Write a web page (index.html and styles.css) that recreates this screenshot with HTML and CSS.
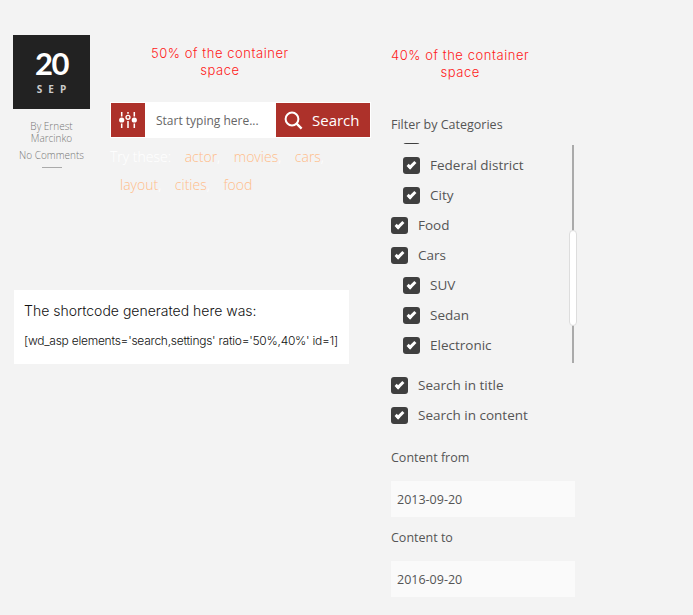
FILE: index.html
```html
<!DOCTYPE html>
<html lang="en">
<head>
  <meta charset="UTF-8">
  <meta name="viewport" content="width=device-width, initial-scale=1.0">
  <title>Search shortcode demo</title>
  <link rel="stylesheet" href="styles.css">
</head>
<body>

  <div class="page">
    <div class="post">
      <div class="post-top">
        <!-- Date and meta -->
        <div class="post-meta">
          <div class="date-box">
            <div class="date-day">20</div>
            <div class="date-month">SEP</div>
          </div>
          <div class="post-author">By Ernest Marcinko</div>
          <div class="post-comments">No Comments</div>
          <div class="post-rule"></div>
        </div>

        <!-- Search column -->
        <div class="search-col">
          <div class="ratio-note ratio-note-left">50% of the container<br>space</div>
          <div class="search-bar">
            <div class="settings-btn">
              <svg width="18" height="18" viewBox="0 0 20 20">
                <path d="M3 1v5M3 14v5M10 1v2M10 11v8M17 1v5M17 14v5" stroke="#fff" stroke-width="1.7" fill="none"/>
                <circle cx="3" cy="10" r="2.9" fill="#fff"/>
                <circle cx="10" cy="7" r="2.2" fill="none" stroke="#fff" stroke-width="1.5"/>
                <circle cx="17" cy="10" r="2.9" fill="#fff"/>
              </svg>
            </div>
            <div class="search-input">Start typing here...</div>
            <div class="search-btn">
              <svg width="19" height="19" viewBox="0 0 19 19">
                <circle cx="8" cy="8" r="6.4" fill="none" stroke="#fff" stroke-width="2"/>
                <path d="M12.6 12.6L17.6 17.6" stroke="#fff" stroke-width="2.4" fill="none"/>
              </svg>
              <span>Search</span>
            </div>
          </div>
          <div class="try-these">
            <span class="try-label">Try these:</span>
            <span class="try-item">actor<i>,</i></span>
            <span class="try-item">movies<i>,</i></span>
            <span class="try-item">cars<i>,</i></span>
            <span class="try-item">layout<i>,</i></span>
            <span class="try-item">cities<i>,</i></span>
            <span class="try-item">food</span>
          </div>
        </div>
      </div>

      <!-- Shortcode card -->
      <div class="shortcode-card">
        <p class="shortcode-title">The shortcode generated here was:</p>
        <p class="shortcode-code">[wd_asp elements='search,settings' ratio='50%,40%' id=1]</p>
      </div>
    </div>

    <!-- Settings column -->
    <div class="settings-col">
      <div class="ratio-note ratio-note-right">40% of the container<br>space</div>
      <div class="field-label filter-label">Filter by Categories</div>

      <div class="cat-list">
        <div class="cat-scroll">
          <div class="check-row nested"><span class="check"></span></div>
          <div class="check-row nested"><span class="check"></span>Federal district</div>
          <div class="check-row nested"><span class="check"></span>City</div>
          <div class="check-row"><span class="check"></span>Food</div>
          <div class="check-row"><span class="check"></span>Cars</div>
          <div class="check-row nested"><span class="check"></span>SUV</div>
          <div class="check-row nested"><span class="check"></span>Sedan</div>
          <div class="check-row nested"><span class="check"></span>Electronic</div>
        </div>
        <div class="scroll-track"></div>
        <div class="scroll-thumb"></div>
      </div>

      <div class="check-row"><span class="check"></span>Search in title</div>
      <div class="check-row"><span class="check"></span>Search in content</div>

      <div class="field-label date-label">Content from</div>
      <div class="date-input">2013-09-20</div>
      <div class="field-label date-label date-label-to">Content to</div>
      <div class="date-input">2016-09-20</div>
    </div>
  </div>

</body>
</html>
```

FILE: styles.css
```css
/* Overall body styling */
body {
  background-color: #f3f3f3;
  font-family: 'Open Sans', sans-serif;
  margin: 0;
  padding: 0;
  overflow: hidden;
}

.page {
  display: flex;
  height: 615px;
  box-sizing: border-box;
  padding: 35px 0 0 13px;
}

.post {
  width: 378px;
}

.post-top {
  display: flex;
  height: 255px;
}

/* Date block */
.post-meta {
  width: 77px;
  text-align: center;
}

.date-box {
  height: 74px;
  box-sizing: border-box;
  padding-top: 10px;
  background: #222;
  color: #fff;
}

.date-day {
  font-family: 'Lato', sans-serif;
  font-size: 31px;
  font-weight: 700;
  line-height: 36px;
  letter-spacing: -1.5px;
}

.date-month {
  font-size: 10px;
  font-weight: 700;
  line-height: 16px;
  letter-spacing: 6px;
  margin-left: 6px;
  color: #ccc;
}

.post-author {
  margin-top: 11px;
  padding: 0 12px;
  font-size: 10px;
  font-weight: 300;
  line-height: 12px;
  color: #777;
}

.post-comments {
  margin-top: 5px;
  font-size: 10px;
  font-weight: 300;
  line-height: 13px;
  color: #777;
}

.post-rule {
  width: 20px;
  margin: 5px auto 0;
  border-top: 1px solid #aaa;
}

/* Red notes */
.ratio-note {
  width: fit-content;
  font-family: 'Inter', sans-serif;
  font-size: 13px;
  font-weight: 300;
  line-height: 17px;
  letter-spacing: 0.55px;
  text-align: center;
  color: #ff1a1a;
}

.ratio-note-left {
  margin: 10px 0 0 41px;
}

.ratio-note-right {
  margin-top: 12px;
}

/* Search bar */
.search-col {
  width: 261px;
  margin-left: 20px;
}

.search-bar {
  display: flex;
  height: 34px;
  margin-top: 23px;
  border: 1px solid #fff;
  background: #fff;
}

.settings-btn {
  display: flex;
  align-items: center;
  justify-content: center;
  width: 34px;
  background: #ad312a;
}

.search-input {
  flex: 1;
  padding-left: 11px;
  font-size: 12px;
  line-height: 36px;
  color: #666;
}

.search-btn {
  display: flex;
  align-items: center;
  gap: 9px;
  width: 94px;
  box-sizing: border-box;
  padding-left: 8px;
  background: #ad312a;
  font-size: 15px;
  color: #fff;
}

/* Try these line */
.try-these {
  margin-top: 5px;
  font-size: 14px;
  font-weight: 300;
  line-height: 28px;
  color: #fff;
}

.try-item {
  margin-left: 10px;
  color: #ffbd8a;
}

.try-item i {
  font-style: normal;
  color: #fff;
}

/* White card */
.shortcode-card {
  width: 335px;
  height: 74px;
  box-sizing: border-box;
  margin-left: 1px;
  padding: 11px 10px;
  background: #fff;
  font-family: 'Inter', sans-serif;
  font-weight: 300;
  color: #111;
}

.shortcode-title {
  margin: 0;
  font-size: 14px;
  line-height: 20px;
}

.shortcode-code {
  margin: 11px 0 0;
  font-size: 12px;
  line-height: 18px;
  letter-spacing: -0.25px;
  white-space: nowrap;
}

/* Settings column */
.settings-col {
  width: 186px;
}

.field-label {
  font-size: 12.5px;
  line-height: 16px;
  color: #555;
}

.filter-label {
  margin-top: 36px;
}

.cat-list {
  position: relative;
  height: 220px;
  margin-top: 10px;
  margin-bottom: 7px;
}

.cat-scroll {
  height: 100%;
  overflow: hidden;
}

.cat-scroll .check-row:first-child {
  margin-top: -23px;
}

.check-row {
  display: flex;
  align-items: center;
  height: 30px;
  font-size: 13.5px;
  color: #555;
}

.check-row.nested {
  padding-left: 12px;
}

.check {
  position: relative;
  flex: none;
  width: 17px;
  height: 17px;
  margin-right: 10px;
  border-radius: 3px;
  background: #3f3f3f;
}

/* Tick mark drawn from two borders */
.check::after {
  content: '';
  position: absolute;
  left: 4px;
  top: 5px;
  width: 9px;
  height: 5px;
  border-left: 3px solid #fff;
  border-bottom: 3px solid #fff;
  box-sizing: border-box;
  transform: rotate(-45deg);
}

.scroll-track {
  position: absolute;
  right: 3px;
  top: 2px;
  bottom: 0;
  width: 2px;
  background: #aaa;
}

.scroll-thumb {
  position: absolute;
  right: 0;
  top: 87px;
  width: 6px;
  height: 94px;
  border: 1px solid #ddd;
  border-radius: 4px;
  background: #fff;
}

/* Date fields */
.date-label {
  margin-top: 20px;
  margin-bottom: 15px;
}

.date-label-to {
  margin-top: 13px;
}

.date-input {
  width: 184px;
  height: 36px;
  box-sizing: border-box;
  padding-left: 6px;
  background: #fafafa;
  font-size: 12.5px;
  line-height: 37px;
  color: #555;
}
```
